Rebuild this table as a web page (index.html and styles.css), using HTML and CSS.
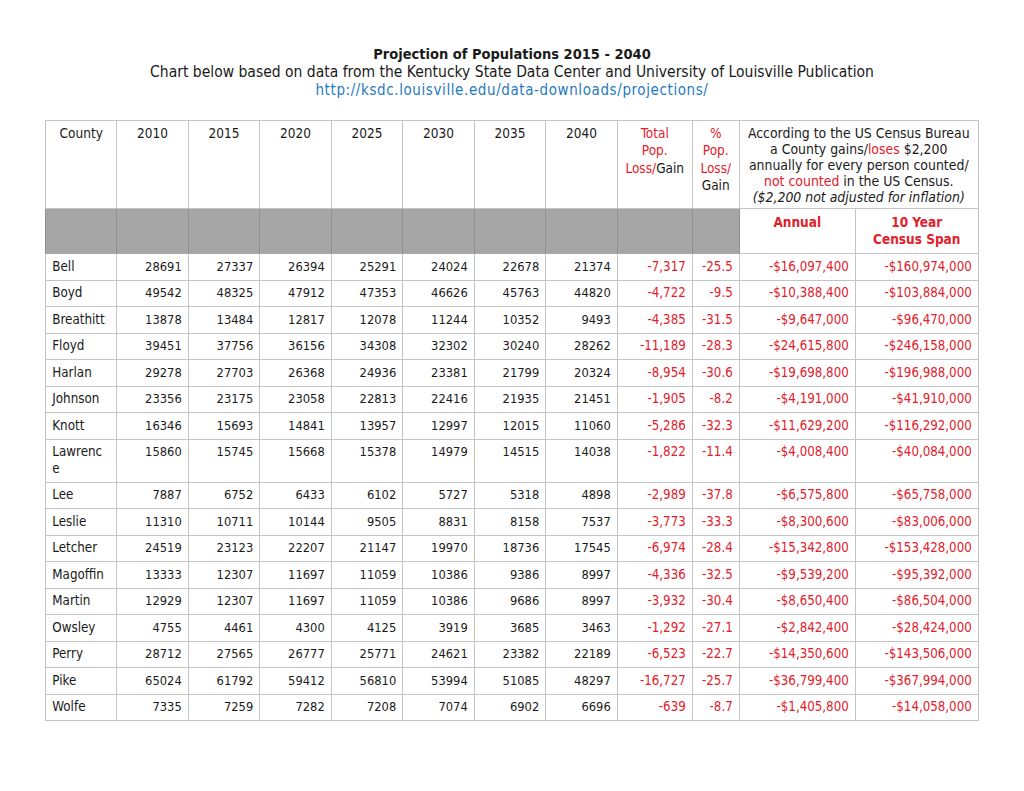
FILE: index.html
```html
<!DOCTYPE html>
<html lang="en">
<head>
<meta charset="utf-8">
<title>Projection of Populations 2015 - 2040</title>
<link rel="stylesheet" href="styles.css">
</head>
<body>
<header class="heading">
  <h1 class="title">Projection of Populations 2015 - 2040</h1>
  <p class="subtitle">Chart below based on data from the Kentucky State Data Center and University of Louisville Publication</p>
  <p class="link">http://ksdc.louisville.edu/data-downloads/projections/</p>
</header>
<table class="data">
  <colgroup>
    <col class="c-county"><col class="c-yr"><col class="c-yr"><col class="c-yr"><col class="c-yr"><col class="c-yr"><col class="c-yr"><col class="c-yr">
    <col class="c-total"><col class="c-pct"><col class="c-annual"><col class="c-span">
  </colgroup>
  <thead>
    <tr class="head">
      <th>County</th><th>2010</th><th>2015</th><th>2020</th><th>2025</th><th>2030</th><th>2035</th><th>2040</th>
      <th class="tall"><span class="red">Total<br>Pop.<br>Loss/</span>Gain</th>
      <th class="tall"><span class="red">%<br>Pop.<br>Loss/</span><br>Gain</th>
      <th colspan="2" class="note">According to the US Census Bureau<br>a County gains/<span class="red">loses</span> $2,200<br>annually for every person counted/<br><span class="red">not counted</span> in the US Census.<br><em>($2,200 not adjusted for inflation)</em></th>
    </tr>
    <tr class="sub">
      <th class="gray"></th><th class="gray"></th><th class="gray"></th><th class="gray"></th><th class="gray"></th><th class="gray"></th><th class="gray"></th><th class="gray"></th><th class="gray"></th><th class="gray"></th>
      <th class="money-h">Annual</th>
      <th class="money-h">10 Year<br>Census Span</th>
    </tr>
  </thead>
  <tbody>
    <tr><td>Bell</td><td>28691</td><td>27337</td><td>26394</td><td>25291</td><td>24024</td><td>22678</td><td>21374</td><td>-7,317</td><td>-25.5</td><td>-$16,097,400</td><td>-$160,974,000</td></tr>
    <tr><td>Boyd</td><td>49542</td><td>48325</td><td>47912</td><td>47353</td><td>46626</td><td>45763</td><td>44820</td><td>-4,722</td><td>-9.5</td><td>-$10,388,400</td><td>-$103,884,000</td></tr>
    <tr><td>Breathitt</td><td>13878</td><td>13484</td><td>12817</td><td>12078</td><td>11244</td><td>10352</td><td>9493</td><td>-4,385</td><td>-31.5</td><td>-$9,647,000</td><td>-$96,470,000</td></tr>
    <tr><td>Floyd</td><td>39451</td><td>37756</td><td>36156</td><td>34308</td><td>32302</td><td>30240</td><td>28262</td><td>-11,189</td><td>-28.3</td><td>-$24,615,800</td><td>-$246,158,000</td></tr>
    <tr><td>Harlan</td><td>29278</td><td>27703</td><td>26368</td><td>24936</td><td>23381</td><td>21799</td><td>20324</td><td>-8,954</td><td>-30.6</td><td>-$19,698,800</td><td>-$196,988,000</td></tr>
    <tr><td>Johnson</td><td>23356</td><td>23175</td><td>23058</td><td>22813</td><td>22416</td><td>21935</td><td>21451</td><td>-1,905</td><td>-8.2</td><td>-$4,191,000</td><td>-$41,910,000</td></tr>
    <tr><td>Knott</td><td>16346</td><td>15693</td><td>14841</td><td>13957</td><td>12997</td><td>12015</td><td>11060</td><td>-5,286</td><td>-32.3</td><td>-$11,629,200</td><td>-$116,292,000</td></tr>
    <tr><td>Lawrenc<br>e</td><td>15860</td><td>15745</td><td>15668</td><td>15378</td><td>14979</td><td>14515</td><td>14038</td><td>-1,822</td><td>-11.4</td><td>-$4,008,400</td><td>-$40,084,000</td></tr>
    <tr><td>Lee</td><td>7887</td><td>6752</td><td>6433</td><td>6102</td><td>5727</td><td>5318</td><td>4898</td><td>-2,989</td><td>-37.8</td><td>-$6,575,800</td><td>-$65,758,000</td></tr>
    <tr><td>Leslie</td><td>11310</td><td>10711</td><td>10144</td><td>9505</td><td>8831</td><td>8158</td><td>7537</td><td>-3,773</td><td>-33.3</td><td>-$8,300,600</td><td>-$83,006,000</td></tr>
    <tr><td>Letcher</td><td>24519</td><td>23123</td><td>22207</td><td>21147</td><td>19970</td><td>18736</td><td>17545</td><td>-6,974</td><td>-28.4</td><td>-$15,342,800</td><td>-$153,428,000</td></tr>
    <tr><td>Magoffin</td><td>13333</td><td>12307</td><td>11697</td><td>11059</td><td>10386</td><td>9386</td><td>8997</td><td>-4,336</td><td>-32.5</td><td>-$9,539,200</td><td>-$95,392,000</td></tr>
    <tr><td>Martin</td><td>12929</td><td>12307</td><td>11697</td><td>11059</td><td>10386</td><td>9686</td><td>8997</td><td>-3,932</td><td>-30.4</td><td>-$8,650,400</td><td>-$86,504,000</td></tr>
    <tr><td>Owsley</td><td>4755</td><td>4461</td><td>4300</td><td>4125</td><td>3919</td><td>3685</td><td>3463</td><td>-1,292</td><td>-27.1</td><td>-$2,842,400</td><td>-$28,424,000</td></tr>
    <tr><td>Perry</td><td>28712</td><td>27565</td><td>26777</td><td>25771</td><td>24621</td><td>23382</td><td>22189</td><td>-6,523</td><td>-22.7</td><td>-$14,350,600</td><td>-$143,506,000</td></tr>
    <tr><td>Pike</td><td>65024</td><td>61792</td><td>59412</td><td>56810</td><td>53994</td><td>51085</td><td>48297</td><td>-16,727</td><td>-25.7</td><td>-$36,799,400</td><td>-$367,994,000</td></tr>
    <tr><td>Wolfe</td><td>7335</td><td>7259</td><td>7282</td><td>7208</td><td>7074</td><td>6902</td><td>6696</td><td>-639</td><td>-8.7</td><td>-$1,405,800</td><td>-$14,058,000</td></tr>
  </tbody>
</table>
</body>
</html>
```
FILE: styles.css
```css
html, body {
  margin: 0;
  padding: 0;
  background: #ffffff;
}
body {
  font-family: "DejaVu Sans Condensed", "DejaVu Sans", sans-serif;
  color: #1a1a1a;
  font-size: 13px;
}
.heading {
  padding-top: 45px;
  text-align: center;
}
.title {
  margin: 0;
  font-size: 14.5px;
  line-height: 18px;
  font-weight: bold;
}
.subtitle, .link {
  margin: 0;
  font-size: 15.5px;
  line-height: 18px;
}
.link {
  font-size: 15px;
  letter-spacing: 0.6px;
  color: #1f7bbd;
}
.data {
  margin: 21px auto 0;
  width: 932px;
  table-layout: fixed;
  border-collapse: collapse;
}
.c-county { width: 71px; }
.c-yr { width: 71.5px; }
.c-total { width: 75px; }
.c-pct { width: 47px; }
.c-annual { width: 116px; }
.c-span { width: 123px; }
.data th, .data td {
  border: 1px solid #c4c4c4;
  padding: 4.5px 6px;
  line-height: 16.5px;
}
.data th {
  font-weight: normal;
  vertical-align: top;
  text-align: center;
}
.head th {
  padding: 4px 2px 3px;
  line-height: 16px;
  font-size: 13.5px;
}
.head th.tall {
  line-height: 17.5px;
  padding-top: 3.5px;
}
.head th.note {
  padding: 4px 4px 3px;
  font-size: 13.9px;
}
.red {
  color: #e2202b;
}
.data th.gray {
  background: #a6a6a6;
  border-color: #a6a6a6 #909090;
}
.data th.money-h {
  color: #e2202b;
  font-weight: bold;
  font-size: 13.5px;
  padding: 5px 6px 5px;
  height: 34px;
}
.data td {
  text-align: right;
  vertical-align: top;
  font-size: 12.8px;
}
.data td:first-child {
  text-align: left;
  font-size: 13.3px;
}
.data td:nth-child(n+9) {
  color: #e2202b;
  font-size: 13.2px;
}
```
